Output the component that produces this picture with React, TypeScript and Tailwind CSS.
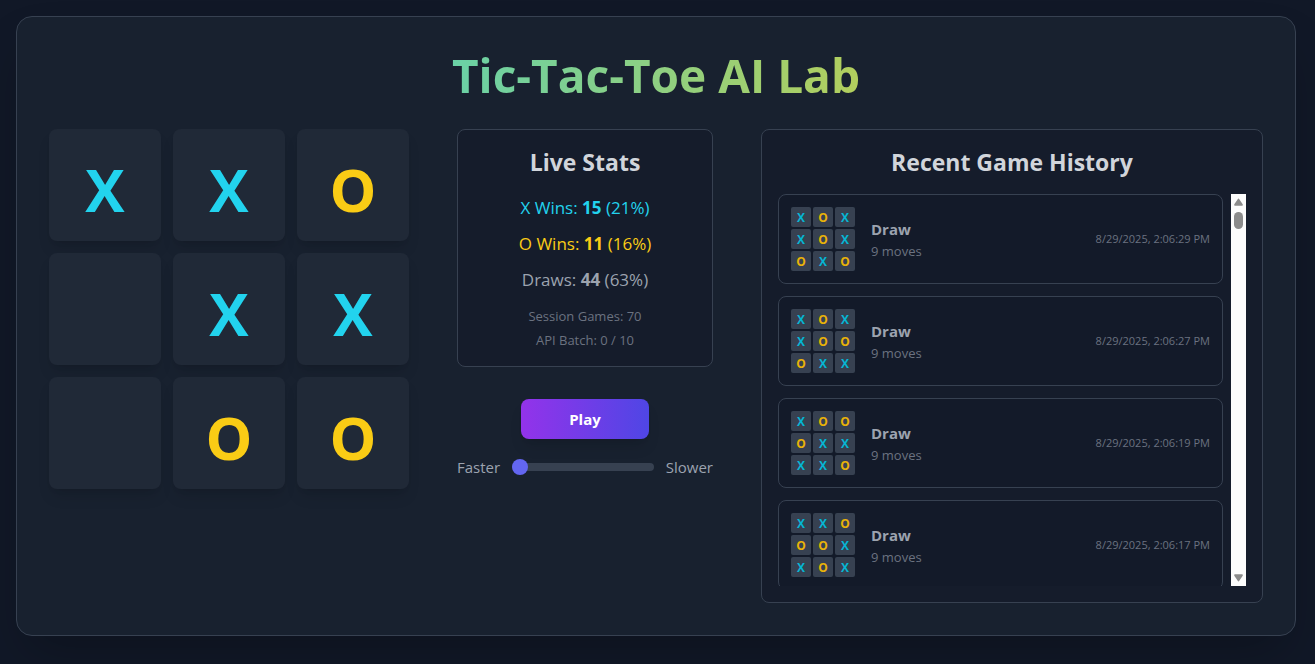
import React, { useState } from "react";

type Mark = "X" | "O" | "";

interface Game {
  board: string;
  result: string;
  moves: number;
  playedAt: string;
}

const BOARD: Mark[] = ["X", "X", "O", "", "X", "X", "", "O", "O"];

const HISTORY: Game[] = [
  { board: "XOXXOXOXO", result: "Draw", moves: 9, playedAt: "8/29/2025, 2:06:29 PM" },
  { board: "XOXXOOOXX", result: "Draw", moves: 9, playedAt: "8/29/2025, 2:06:27 PM" },
  { board: "XOOOXXXXO", result: "Draw", moves: 9, playedAt: "8/29/2025, 2:06:19 PM" },
  { board: "XXOOOXXOX", result: "Draw", moves: 9, playedAt: "8/29/2025, 2:06:17 PM" },
];

function Board() {
  return (
    <div className="grid shrink-0 grid-cols-3 gap-3">
      {BOARD.map((mark, i) => (
        <button
          key={i}
          type="button"
          aria-label={`Cell ${i + 1}`}
          className={`flex size-28 items-center justify-center rounded-lg bg-[#202937] pt-2 text-[59px] leading-none font-bold shadow-lg ${
            mark === "X" ? "text-[#22d3ee]" : "text-[#facc15]"
          }`}
        >
          {mark}
        </button>
      ))}
    </div>
  );
}

function StatLine({ label, count, percent, tone }: { label: string; count: number; percent: number; tone: string }) {
  return (
    <p className={`text-[17px] leading-7 ${tone}`}>
      {label}: <span className="font-bold">{count}</span> ({percent}%)
    </p>
  );
}

function LiveStats() {
  return (
    <section className="rounded-lg border border-[#374151] bg-[#111827]/50 p-4 text-center">
      <h2 className="mb-4 text-[23px] leading-8 font-bold text-[#d1d5db]">Live Stats</h2>
      <div className="flex flex-col gap-2">
        <StatLine label="X Wins" count={15} percent={21} tone="text-[#22d3ee]" />
        <StatLine label="O Wins" count={11} percent={16} tone="text-[#facc15]" />
        <StatLine label="Draws" count={44} percent={63} tone="text-[#9ca3af]" />
      </div>
      <div className="mt-3 flex flex-col gap-1 text-[13px] leading-5 text-[#6b7280]">
        <p>Session Games: 70</p>
        <p>API Batch: 0 / 10</p>
      </div>
    </section>
  );
}

function SpeedSlider() {
  const [speed, setSpeed] = useState(0);
  return (
    <div className="mt-4 flex w-full items-center gap-3 text-[15px] leading-6 text-[#9ca3af]">
      <span>Faster</span>
      <input
        type="range"
        aria-label="Playback speed"
        min={0}
        max={100}
        value={speed}
        onChange={(e) => setSpeed(Number(e.target.value))}
        className="h-2 w-full min-w-0 flex-1 cursor-pointer appearance-none rounded-lg bg-[#374151] [&::-webkit-slider-thumb]:size-4 [&::-webkit-slider-thumb]:appearance-none [&::-webkit-slider-thumb]:rounded-full [&::-webkit-slider-thumb]:bg-[#6366f1]"
      />
      <span>Slower</span>
    </div>
  );
}

function HistoryItem({ game }: { game: Game }) {
  return (
    <li className="flex items-center gap-4 rounded-lg border border-[#374151] bg-[#111827]/50 p-3">
      <div className="grid shrink-0 grid-cols-3 gap-0.5">
        {game.board.split("").map((mark, i) => (
          <span
            key={i}
            className={`flex size-5 items-center justify-center rounded-xs bg-[#374151] pt-px text-xs font-bold ${
              mark === "X" ? "text-[#06b6d4]" : "text-[#eab308]"
            }`}
          >
            {mark}
          </span>
        ))}
      </div>
      <div className="flex-1">
        <p className="text-[15px] leading-6 font-bold text-[#9ca3af]">{game.result}</p>
        <p className="text-[13px] leading-5 text-[#6b7280]">{game.moves} moves</p>
      </div>
      <time className="text-[11px] leading-4 text-[#6b7280]">{game.playedAt}</time>
    </li>
  );
}

function ScrollTrack() {
  return (
    <div aria-hidden="true" className="flex w-[15px] shrink-0 flex-col items-center bg-[#fcfcfc] pt-1 pb-1">
      <svg viewBox="0 0 9 8" className="h-2 w-[9px] fill-[#8b8b8b]">
        <path d="M3.7 1.2Q4.5 0 5.3 1.2L8.7 6.2Q9.2 7.6 8 7.8H1Q-.2 7.6 .3 6.2Z" />
      </svg>
      <div className="mt-1.5 h-[17px] w-[9px] rounded-full bg-[#8b8b8b]" />
      <svg viewBox="0 0 9 8" className="mt-auto h-2 w-[9px] fill-[#8b8b8b]">
        <path d="M3.7 6.8Q4.5 8 5.3 6.8L8.7 1.8Q9.2 .4 8 .2H1Q-.2 .4 .3 1.8Z" />
      </svg>
    </div>
  );
}

function GameHistory() {
  return (
    <section className="min-w-0 flex-1 rounded-lg border border-[#374151] bg-[#111827]/50 p-4">
      <h2 className="mb-4 text-center text-[23px] leading-8 font-bold text-[#d1d5db]">Recent Game History</h2>
      <div className="flex h-[392px] gap-2">
        <ul className="flex min-w-0 flex-1 flex-col gap-3 overflow-y-auto [scrollbar-width:none]">
          {HISTORY.map((game) => (
            <HistoryItem key={game.playedAt} game={game} />
          ))}
        </ul>
        <ScrollTrack />
      </div>
    </section>
  );
}

export default function App() {
  return (
    <div className="min-h-screen bg-[#111827] p-4 font-['Segoe_UI','Open_Sans',sans-serif] text-white">
      <main className="max-w-7xl rounded-2xl border border-[#374151] bg-[#1f2937]/50 p-8 shadow-2xl">
        <h1 className="mb-7 bg-linear-to-r/srgb from-[#22d3ee] to-[#facc15] bg-clip-text pt-0.5 pb-0.5 text-center text-[46px] leading-[48px] font-bold text-transparent">
          Tic-Tac-Toe AI Lab
        </h1>
        <div className="flex items-start gap-12">
          <Board />
          <div className="flex w-64 shrink-0 flex-col items-center">
            <div className="w-full">
              <LiveStats />
            </div>
            <button
              type="button"
              className="mt-8 h-10 w-32 rounded-lg bg-linear-to-r/srgb from-[#9333ea] to-[#4f46e5] text-[15px] font-bold text-white shadow-lg"
            >
              Play
            </button>
            <SpeedSlider />
          </div>
          <GameHistory />
        </div>
      </main>
    </div>
  );
}
